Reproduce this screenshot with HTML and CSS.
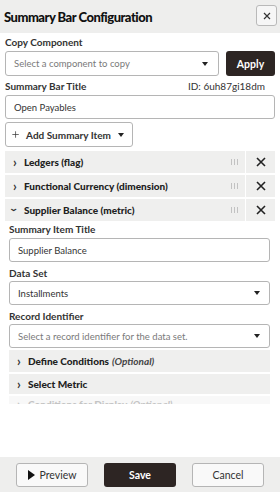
FILE: index.html
```html
<!DOCTYPE html>
<html lang="en">
<head>
  <meta charset="UTF-8">
  <meta name="viewport" content="width=device-width, initial-scale=1.0">
  <title>Summary Bar Configuration</title>
  <link rel="stylesheet" href="styles.css">
</head>
<body>
  <div class="panel">
    <!-- Header -->
    <div class="header">
      <h1>Summary Bar Configuration</h1>
      <button class="close-btn" aria-label="Close">
        <svg width="8" height="8" viewBox="0 0 8 8"><path d="M1 1L7 7M7 1L1 7" stroke="#333" stroke-width="1.2"/></svg>
      </button>
    </div>

    <!-- Scrollable Form -->
    <div class="scroll">
      <label class="label">Copy Component</label>
      <div class="copy-row">
        <div class="select grow">
          <span class="placeholder">Select a component to copy</span>
          <span class="caret"></span>
        </div>
        <button class="btn-dark apply">Apply</button>
      </div>

      <div class="label-row">
        <span class="label">Summary Bar Title</span>
        <span class="item-id">ID: 6uh87gi18dm</span>
      </div>
      <div class="input">Open Payables</div>

      <button class="add-btn">
        <svg width="11" height="11" viewBox="0 0 11 11"><path d="M5.5 0.5V10.5M0.5 5.5H10.5" stroke="#333" stroke-width="1.1"/></svg>
        <span class="add-text">Add Summary Item</span>
        <span class="caret"></span>
      </button>

      <!-- Summary Items -->
      <div class="item">
        <div class="item-main">
          <span class="chev">&#x203A;</span>
          <span class="item-name">Ledgers (flag)</span>
          <span class="grip"></span>
        </div>
        <div class="item-del">
          <svg width="10" height="10" viewBox="0 0 10 10"><path d="M1 1L9 9M9 1L1 9" stroke="#222" stroke-width="1.6"/></svg>
        </div>
      </div>
      <div class="item">
        <div class="item-main">
          <span class="chev">&#x203A;</span>
          <span class="item-name">Functional Currency (dimension)</span>
          <span class="grip"></span>
        </div>
        <div class="item-del">
          <svg width="10" height="10" viewBox="0 0 10 10"><path d="M1 1L9 9M9 1L1 9" stroke="#222" stroke-width="1.6"/></svg>
        </div>
      </div>
      <div class="item">
        <div class="item-main">
          <span class="chev open">&#x203A;</span>
          <span class="item-name">Supplier Balance (metric)</span>
          <span class="grip"></span>
        </div>
        <div class="item-del">
          <svg width="10" height="10" viewBox="0 0 10 10"><path d="M1 1L9 9M9 1L1 9" stroke="#222" stroke-width="1.6"/></svg>
        </div>
      </div>

      <div class="item-body">
        <label class="label">Summary Item Title</label>
        <div class="input">Supplier Balance</div>

        <label class="label">Data Set</label>
        <div class="select">
          <span class="value">Installments</span>
          <span class="caret"></span>
        </div>

        <label class="label">Record Identifier</label>
        <div class="select">
          <span class="placeholder">Select a record identifier for the data set.</span>
          <span class="caret"></span>
        </div>

        <div class="section"><span class="chev">&#x203A;</span><b>Define Conditions</b> <i>(Optional)</i></div>
        <div class="section"><span class="chev">&#x203A;</span><b>Select Metric</b></div>
        <div class="section faded"><span class="chev">&#x203A;</span><b>Conditions for Display</b> <i>(Optional)</i></div>
      </div>
    </div>

    <!-- Footer -->
    <div class="footer">
      <button class="btn-outline">
        <svg width="7" height="10" viewBox="0 0 7 10"><path d="M0 0L7 5L0 10Z" fill="#111"/></svg>
        Preview
      </button>
      <button class="btn-dark">Save</button>
      <button class="btn-outline">Cancel</button>
    </div>
  </div>
</body>
</html>
```

FILE: styles.css
```css
body {
  margin: 0;
  font-family: Lato, "Open Sans", Arial, sans-serif;
  color: #222;
  background: #fff;
}
.panel {
  width: 280px;
  height: 492px;
  display: flex;
  flex-direction: column;
}
.header {
  height: 33px;
  background: #eeeeed;
  display: flex;
  align-items: center;
  justify-content: space-between;
  padding: 0 3px 0 4px;
  box-sizing: border-box;
  flex: none;
}
.header h1 {
  margin: 0;
  font-size: 13px;
  font-weight: 900;
  color: #111;
  letter-spacing: -0.5px;
}
.close-btn {
  width: 21px;
  height: 21px;
  border: 1px solid #b9b9b9;
  border-radius: 3px;
  background: #f6f6f6;
  display: flex;
  align-items: center;
  justify-content: center;
  padding: 0;
  margin-top: -2px;
}
.scroll {
  height: 371px;
  overflow: hidden;
  padding: 2px 5px 0 5px;
  box-sizing: border-box;
  flex: none;
}
.label {
  display: block;
  font-size: 10px;
  font-weight: 700;
  color: #333;
  height: 14px;
  line-height: 14px;
}
.copy-row {
  display: flex;
  gap: 7px;
  margin-top: 2px;
}
.grow {
  flex: 1;
}
.select, .input {
  height: 24px;
  border: 1px solid #b5b5b5;
  border-radius: 3px;
  display: flex;
  align-items: center;
  justify-content: space-between;
  padding: 0 9px 0 8px;
  font-size: 9.5px;
  color: #333;
  box-sizing: border-box;
  background: #fff;
}
.copy-row .select {
  height: 25px;
  padding-right: 10px;
}
.placeholder {
  color: #7a7a7a;
}
.value {
  color: #333;
}
.caret {
  width: 0;
  height: 0;
  border-left: 3.5px solid transparent;
  border-right: 3.5px solid transparent;
  border-top: 4px solid #222;
}
.btn-dark {
  background: #2d2523;
  color: #fff;
  border: none;
  border-radius: 3px;
  font-family: inherit;
  font-weight: 700;
  font-size: 10.5px;
  height: 24px;
  width: 72px;
}
.apply {
  width: 49px;
  height: 25px;
}
.label-row {
  display: flex;
  justify-content: space-between;
  margin-top: 3px;
  padding-right: 10px;
}
.item-id {
  font-size: 10px;
  color: #333;
  line-height: 14px;
}
.label-row + .input {
  margin-top: 2px;
}
.add-btn {
  margin-top: 3px;
  height: 25px;
  width: 128px;
  border: 1px solid #b5b5b5;
  border-radius: 3px;
  background: #fff;
  display: flex;
  align-items: center;
  gap: 7px;
  padding: 0 8px 0 6px;
  font-family: inherit;
  font-size: 10px;
  font-weight: 700;
  color: #333;
  white-space: nowrap;
}
.add-text {
  flex: 1;
  text-align: left;
}
.item {
  display: flex;
  gap: 1px;
  height: 22px;
  margin-top: 2px;
}
.add-btn + .item {
  margin-top: 4px;
}
.item-main {
  flex: 1;
  background: #efefee;
  display: flex;
  align-items: center;
  padding: 0 6px 0 4px;
}
.item-del {
  width: 29px;
  background: #efefee;
  display: flex;
  align-items: center;
  justify-content: center;
}
.chev {
  display: inline-block;
  width: 12px;
  font-size: 13px;
  font-weight: 700;
  color: #333;
  line-height: 10px;
  text-align: center;
}
.chev.open {
  transform: rotate(90deg);
}
.item-name {
  flex: 1;
  font-size: 10px;
  font-weight: 900;
  color: #222;
  margin-left: 3px;
}
.grip {
  width: 9px;
  height: 6px;
  background-image: radial-gradient(circle, #c2c2c2 0.7px, transparent 0.9px);
  background-size: 3px 2px;
}
.item-body {
  padding: 1px 5px 0 4px;
}
.item-body .label {
  margin-top: 4px;
}
.item-body .label:first-child {
  margin-top: 0;
}
.item-body .input, .item-body .select {
  margin-top: 1px;
}
.item-body .label:first-child + .input {
  margin-top: 2px;
}
.section {
  height: 20px;
  background: #efefee;
  display: flex;
  align-items: center;
  padding-left: 4px;
  margin-top: 2px;
  font-size: 10px;
  color: #222;
}
.item-body .select + .section {
  height: 22px;
}
.section b {
  font-weight: 900;
  margin-left: 3px;
}
.section i {
  margin-left: 3px;
  color: #444;
  font-weight: 700;
}
.section.faded {
  height: 16px;
  background: #f8f8f8;
  color: #c4c4c4;
}
.section.faded i, .section.faded .chev {
  color: #c4c4c4;
}
.footer {
  margin-top: auto;
  height: 35px;
  background: #eeeeed;
  display: flex;
  align-items: center;
  justify-content: center;
  gap: 16px;
  flex: none;
}
.btn-outline {
  height: 24px;
  width: 72px;
  border: 1px solid #b5b5b5;
  border-radius: 3px;
  background: #f9f9f9;
  font-family: inherit;
  font-size: 10.5px;
  color: #333;
  display: flex;
  align-items: center;
  justify-content: center;
  gap: 5px;
}
```
